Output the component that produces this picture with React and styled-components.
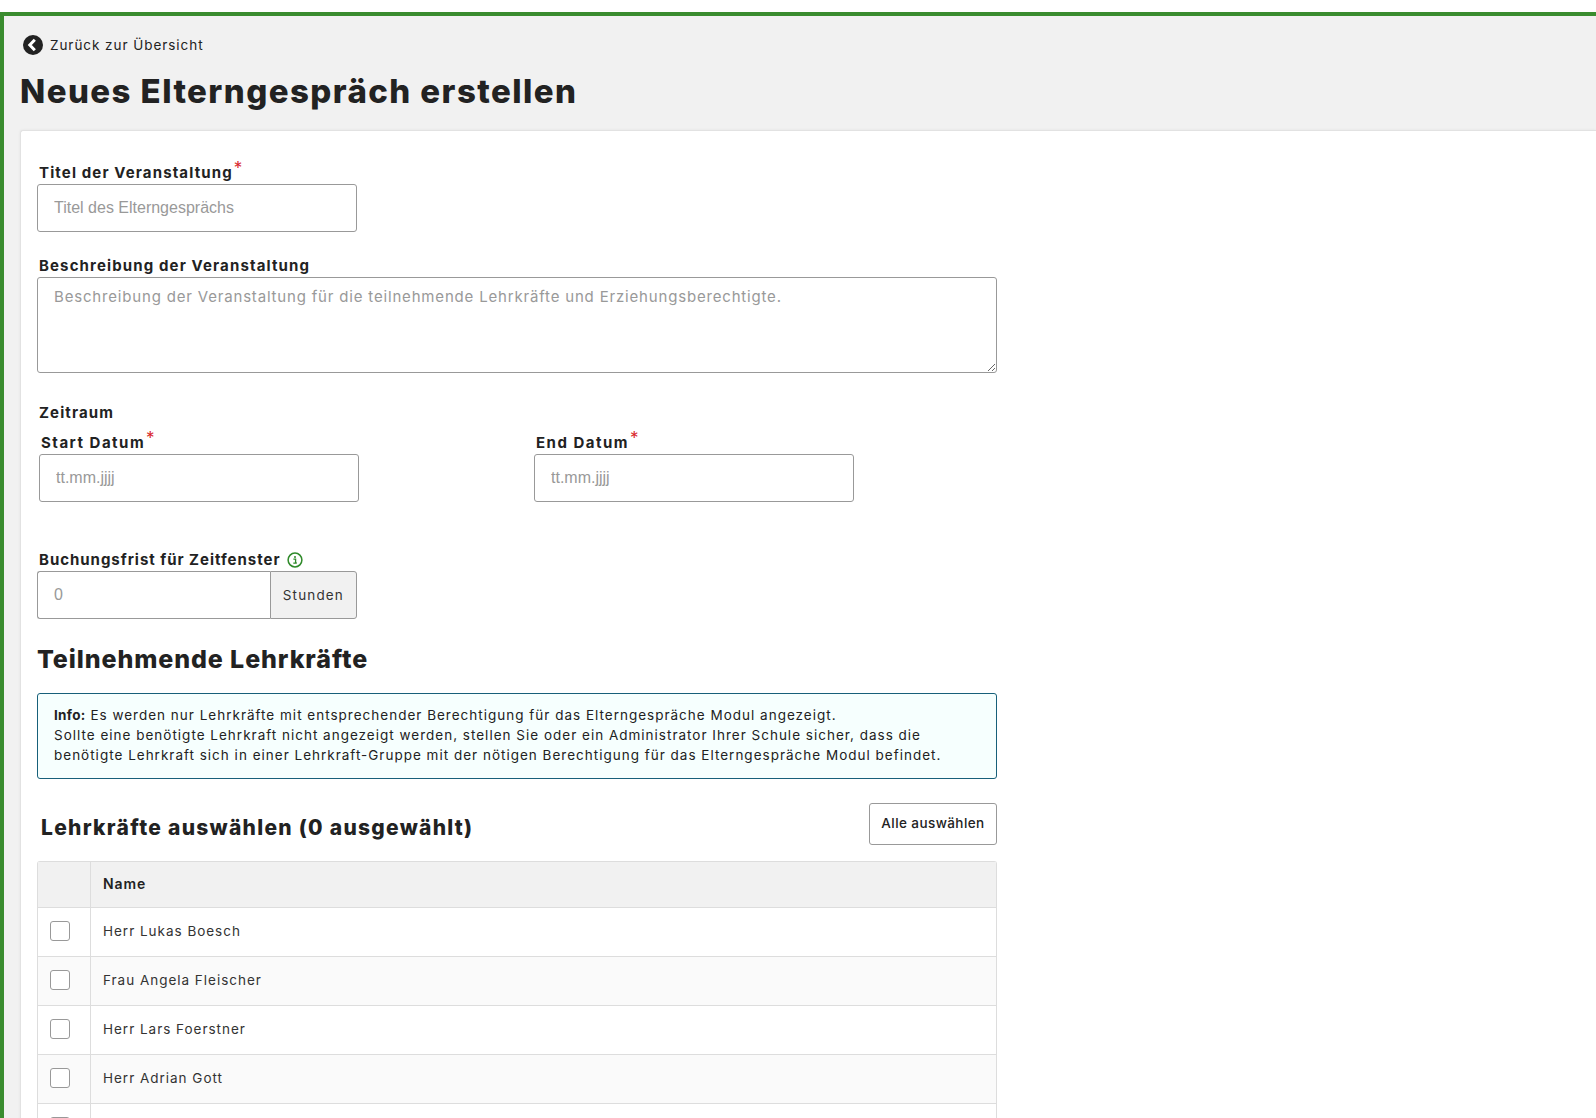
import React from "react";
import styled, { createGlobalStyle } from "styled-components";

const Global = createGlobalStyle`
  html, body { margin: 0; padding: 0; background: #fff; height: 1118px; overflow: hidden; }
  * { box-sizing: border-box; }
  body { font-family: Inter, "Liberation Sans", sans-serif; color: #222; }
`;
const Frame = styled.div`
  margin-top: 12px; height: 1106px; overflow: hidden;
  border-top: 4px solid #3a8c2f; border-left: 4px solid #3a8c2f;
  background: #f1f1f1;
  padding: 0 0 0 16px;
`;
const BackLink = styled.a`
  display: flex; align-items: center; gap: 7px; height: 20px; margin: 19px 0 0 3px;
  font-size: 13.5px; letter-spacing: 0.95px; color: #222;
`;
const PageTitle = styled.h1`
  margin: 16px 0 19px; font-size: 33px; line-height: 40px; font-weight: 800; letter-spacing: 1.43px; color: #222;
`;
const Card = styled.div`
  background: #fff; border: 1px solid #e2e2e2; border-right: 0; border-bottom: 0; border-radius: 3px 0 0 0;
  padding: 32px 16px 0 16px; box-shadow: 0 0 3px rgba(0,0,0,.06); height: 1000px;
`;
const Column = styled.div`width: 960px;`;
const Label = styled.label`
  display: block; font-size: 15px; line-height: 20px; font-weight: 700; letter-spacing: 1.13px; color: #222;
  padding-left: 2px; margin-bottom: 1px;
`;
const DateLabel = styled(Label)`letter-spacing: 1.5px;`;
const Star = styled.span`
  color: #d9262b; font-size: 17px; line-height: 0; font-weight: 400; margin-left: 1px; vertical-align: 4px; letter-spacing: 0;
`;
const TextInput = styled.input`
  display: block; width: 320px; height: 48px; padding: 0 16px; border: 1px solid #999; border-radius: 3px;
  background: #fff; font: 16px "Liberation Sans", Arial, sans-serif; outline: none;
  &::placeholder { color: #999; opacity: 1; }
`;
const TextArea = styled.textarea`
  display: block; width: 960px; height: 96px; padding: 9px 16px; border: 1px solid #999; border-radius: 3px;
  background: #fff; font: 15px/20px Inter, sans-serif; letter-spacing: 0.82px; outline: none; margin: 0;
  &::placeholder { color: #999; opacity: 1; }
`;
const Field = styled.div`margin-bottom: ${p => p.$mb}px;`;
const DateRow = styled.div`display: flex; gap: 175px; padding-left: 2px;`;
const PeriodLabel = styled(Label)`margin-top: 30px; margin-bottom: 10px;`;
const DeadlineLabel = styled(Label)`margin-top: 48px; margin-bottom: 1px; letter-spacing: 0.97px;`;
const InputGroup = styled.div`display: flex; width: 320px; height: 48px;`;
const GroupInput = styled(TextInput)`
  flex: 1; width: auto; min-width: 0; height: 48px; border-radius: 3px 0 0 3px; border-right: 0;
`;
const Addon = styled.span`
  display: flex; align-items: center; padding: 0 12px; border: 1px solid #999; border-radius: 0 3px 3px 0;
  background: #f1f1f1; font-size: 13.5px; letter-spacing: 1.15px; color: #333;
`;
const H2 = styled.h2`margin: 23px 0 17px; font-size: 25px; line-height: 34px; font-weight: 800; letter-spacing: 0.9px; color: #222;`;
const Info = styled.div`
  height: 86px; padding: 11px 16px; border: 1px solid #17607a; border-radius: 3px; background: #f6fffe;
  font-size: 13.5px; line-height: 20px; letter-spacing: 1px; color: #222; white-space: nowrap;
  b { font-weight: 700; letter-spacing: 0.3px; }
`;
const TableHead = styled.div`display: flex; align-items: center; justify-content: space-between; margin: 24px 0 16px;`;
const H3 = styled.h3`margin: 7px 0 0 4px; font-size: 21px; line-height: 30px; font-weight: 800; letter-spacing: 1.28px; color: #222;`;
const Button = styled.button`
  height: 42px; width: 128px; padding: 0 0 2px; background: #fff; border: 1px solid #999; border-radius: 3px;
  font: 500 13.5px Inter, sans-serif; letter-spacing: 0.42px; color: #222;
`;
const Table = styled.table`
  width: 960px; border-collapse: separate; border-spacing: 0; table-layout: fixed;
  border: 1px solid #ddd; border-bottom: 0; border-radius: 3px 3px 0 0;
`;
const Th = styled.th`
  height: 46px; padding: 0 12px 2px; background: #f1f1f1; text-align: left; font-size: 14px; font-weight: 600; letter-spacing: 0.95px;
  border-bottom: 1px solid #ddd; border-left: ${p => p.$first ? "0" : "1px solid #ddd"}; width: ${p => p.$first ? "52px" : "auto"};
`;
const Td = styled.td`
  height: 49px; padding: 0 12px 2px; font-size: 13.5px; letter-spacing: 0.98px; color: #333;
  background: ${p => p.$alt ? "#fafafa" : "#fff"};
  border-bottom: 1px solid #ddd; border-left: ${p => p.$first ? "0" : "1px solid #ddd"};
`;
const Check = styled.input.attrs({ type: "checkbox" })`
  appearance: none; display: block; width: 20px; height: 20px; margin: 0; background: #fff;
  border: 1px solid #999; border-radius: 3px;
`;
const InfoGlyph = styled.svg`margin-left: 7px; vertical-align: -3px;`;

const BackIcon = () => (
  <svg width="20" height="20" viewBox="0 0 20 20">
    <circle cx="10" cy="10" r="10" fill="#222" />
    <path d="M11.8 4.8 6.8 10l5 5.2" fill="none" stroke="#fff" strokeWidth="3" />
  </svg>
);
const InfoIcon = () => (
  <InfoGlyph width="16" height="16" viewBox="0 0 16 16">
    <circle cx="8" cy="8" r="6.9" fill="none" stroke="#2f8a2a" strokeWidth="1.5" />
    <circle cx="8" cy="4.9" r="1" fill="#2f8a2a" />
    <path d="M6.4 7.2H8.6V11H9.8M6.3 11.2H9.8" fill="none" stroke="#2f8a2a" strokeWidth="1.3" />
  </InfoGlyph>
);

const teachers = ["Herr Lukas Boesch", "Frau Angela Fleischer", "Herr Lars Foerstner", "Herr Adrian Gott", ""];

export default function App() {
  return (
    <>
      <Global />
      <Frame>
        <BackLink><BackIcon />Zurück zur Übersicht</BackLink>
        <PageTitle>Neues Elterngespräch erstellen</PageTitle>
        <Card>
          <Column>
            <Field $mb={24}>
              <Label>Titel der Veranstaltung<Star>*</Star></Label>
              <TextInput placeholder="Titel des Elterngesprächs" />
            </Field>
            <Field $mb={0}>
              <Label>Beschreibung der Veranstaltung</Label>
              <TextArea placeholder="Beschreibung der Veranstaltung für die teilnehmende Lehrkräfte und Erziehungsberechtigte." />
            </Field>
            <PeriodLabel as="div">Zeitraum</PeriodLabel>
            <DateRow>
              <div>
                <DateLabel>Start Datum<Star>*</Star></DateLabel>
                <TextInput placeholder="tt.mm.jjjj" />
              </div>
              <div>
                <DateLabel>End Datum<Star>*</Star></DateLabel>
                <TextInput placeholder="tt.mm.jjjj" />
              </div>
            </DateRow>
            <DeadlineLabel as="div">Buchungsfrist für Zeitfenster<InfoIcon /></DeadlineLabel>
            <InputGroup>
              <GroupInput placeholder="0" />
              <Addon>Stunden</Addon>
            </InputGroup>
            <H2>Teilnehmende Lehrkräfte</H2>
            <Info>
              <b>Info:</b> Es werden nur Lehrkräfte mit entsprechender Berechtigung für das Elterngespräche Modul angezeigt.<br />
              Sollte eine benötigte Lehrkraft nicht angezeigt werden, stellen Sie oder ein Administrator Ihrer Schule sicher, dass die<br />
              benötigte Lehrkraft sich in einer Lehrkraft-Gruppe mit der nötigen Berechtigung für das Elterngespräche Modul befindet.
            </Info>
            <TableHead>
              <H3>Lehrkräfte auswählen (0 ausgewählt)</H3>
              <Button>Alle auswählen</Button>
            </TableHead>
            <Table>
              <thead>
                <tr><Th $first /><Th>Name</Th></tr>
              </thead>
              <tbody>
                {teachers.map((t, i) => (
                  <tr key={i}>
                    <Td $first $alt={i % 2 === 1}><Check /></Td>
                    <Td $alt={i % 2 === 1}>{t}</Td>
                  </tr>
                ))}
              </tbody>
            </Table>
          </Column>
        </Card>
      </Frame>
    </>
  );
}
